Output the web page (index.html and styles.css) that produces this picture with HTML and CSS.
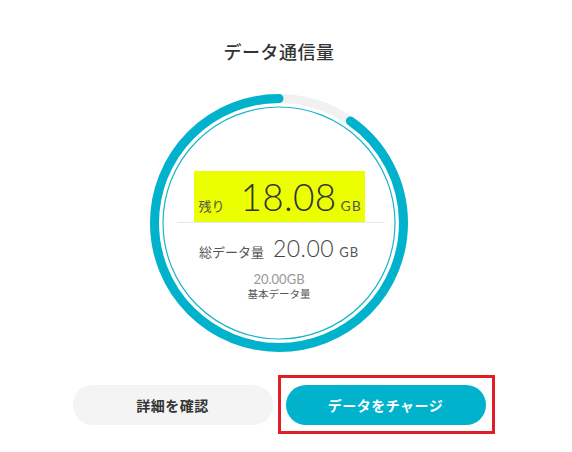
FILE: index.html
```html
<!DOCTYPE html>
<html lang="ja">
<head>
<meta charset="utf-8">
<link rel="stylesheet" href="styles.css">
</head>
<body>
<main class="page">
  <h1 class="title">データ通信量</h1>
  <div class="gauge">
    <svg class="ring" width="260" height="260" viewBox="0 0 260 260">
      <circle cx="130" cy="130" r="124.5" fill="none" stroke="#f1f1f1" stroke-width="9"/>
      <circle cx="130" cy="130" r="124.5" fill="none" stroke="#00b2cc" stroke-width="9" stroke-linecap="round"
        stroke-dasharray="707 1000" stroke-dashoffset="-76" transform="rotate(-90 130 130)"/>
      <circle cx="130" cy="130" r="116" fill="none" stroke="#19b5cc" stroke-width="1.2"/>
    </svg>
    <div class="gauge-body">
      <div class="remain">
        <span class="remain-label">残り</span>
        <span class="remain-value">18.08</span>
        <span class="remain-unit">GB</span>
      </div>
      <div class="total">
        <span class="total-label">総データ量</span>
        <span class="total-value">20.00</span>
        <span class="total-unit">GB</span>
      </div>
      <div class="basic-value">20.00GB</div>
      <div class="basic-label">基本データ量</div>
    </div>
  </div>
  <div class="actions">
    <button class="btn btn-light">詳細を確認</button>
    <div class="highlight">
      <button class="btn btn-primary">データをチャージ</button>
    </div>
  </div>
</main>
</body>
</html>
```
FILE: styles.css
```css
* { box-sizing: border-box; }
html, body { margin: 0; padding: 0; background: #fff; }
body {
  font-family: "Noto Sans CJK JP", "Noto Sans", sans-serif;
  color: #333;
}
.page {
  width: 558px;
  display: flex;
  flex-direction: column;
  align-items: center;
  padding-top: 38px;
}
.title {
  margin: 0;
  font-size: 18px;
  font-weight: 500;
  line-height: 26px;
  color: #333;
  letter-spacing: 0.5px;
}
.gauge {
  position: relative;
  width: 260px;
  height: 260px;
  margin-top: 29px;
}
.ring {
  position: absolute;
  left: 0;
  top: 0;
}
.gauge-body {
  position: relative;
  display: flex;
  flex-direction: column;
  align-items: center;
  padding-top: 78px;
}
.remain {
  width: 171px;
  height: 51px;
  background: #ebff00;
  display: flex;
  align-items: baseline;
  white-space: nowrap;
  padding: 6px 0 0 5px;
  position: relative;
}
.remain::after {
  content: "";
  position: absolute;
  left: -17px;
  right: -19px;
  bottom: -1px;
  height: 1px;
  background: #e8e8e8;
}
.remain-label {
  flex-shrink: 0;
  font-size: 13px;
  color: #555;
}
.remain-value {
  flex-shrink: 0;
  font-family: "Lato", "Open Sans", sans-serif;
  font-weight: 300;
  font-size: 37px;
  line-height: 40px;
  color: #333;
  margin-left: 16px;
  letter-spacing: 0.3px;
}
.remain-unit {
  flex-shrink: 0;
  font-family: "Lato", "Open Sans", sans-serif;
  font-size: 14px;
  color: #555;
  margin-left: 4px;
  letter-spacing: 1px;
}
.total {
  display: flex;
  align-items: baseline;
  white-space: nowrap;
  margin-top: 12px;
  height: 26px;
}
.total-label {
  font-size: 13px;
  color: #555;
}
.total-value {
  font-family: "Lato", "Open Sans", sans-serif;
  font-weight: 300;
  font-size: 23px;
  color: #444;
  margin-left: 9px;
  letter-spacing: 0.5px;
}
.total-unit {
  font-family: "Lato", "Open Sans", sans-serif;
  font-size: 13px;
  color: #555;
  margin-left: 5px;
  letter-spacing: 1px;
}
.basic-value {
  font-family: "Lato", "Open Sans", sans-serif;
  font-weight: 400;
  font-size: 13px;
  color: #999;
  margin-top: 11px;
  line-height: 16px;
}
.basic-label {
  font-size: 10.5px;
  color: #555;
  line-height: 14px;
}
.actions {
  display: flex;
  align-items: center;
  gap: 5px;
  margin-top: 22px;
  margin-left: 9px;
}
.btn {
  width: 200px;
  height: 40px;
  border: 0;
  border-radius: 20px;
  font-family: "Noto Sans CJK JP", sans-serif;
  font-size: 14px;
  font-weight: 700;
  letter-spacing: 0.5px;
}
.btn-light {
  background: #f4f4f4;
  color: #333;
}
.btn-primary {
  background: #00b2cc;
  color: #fff;
}
.highlight {
  border: 3px solid #e11d25;
  padding: 7px 6px 6px 5px;
}
```
